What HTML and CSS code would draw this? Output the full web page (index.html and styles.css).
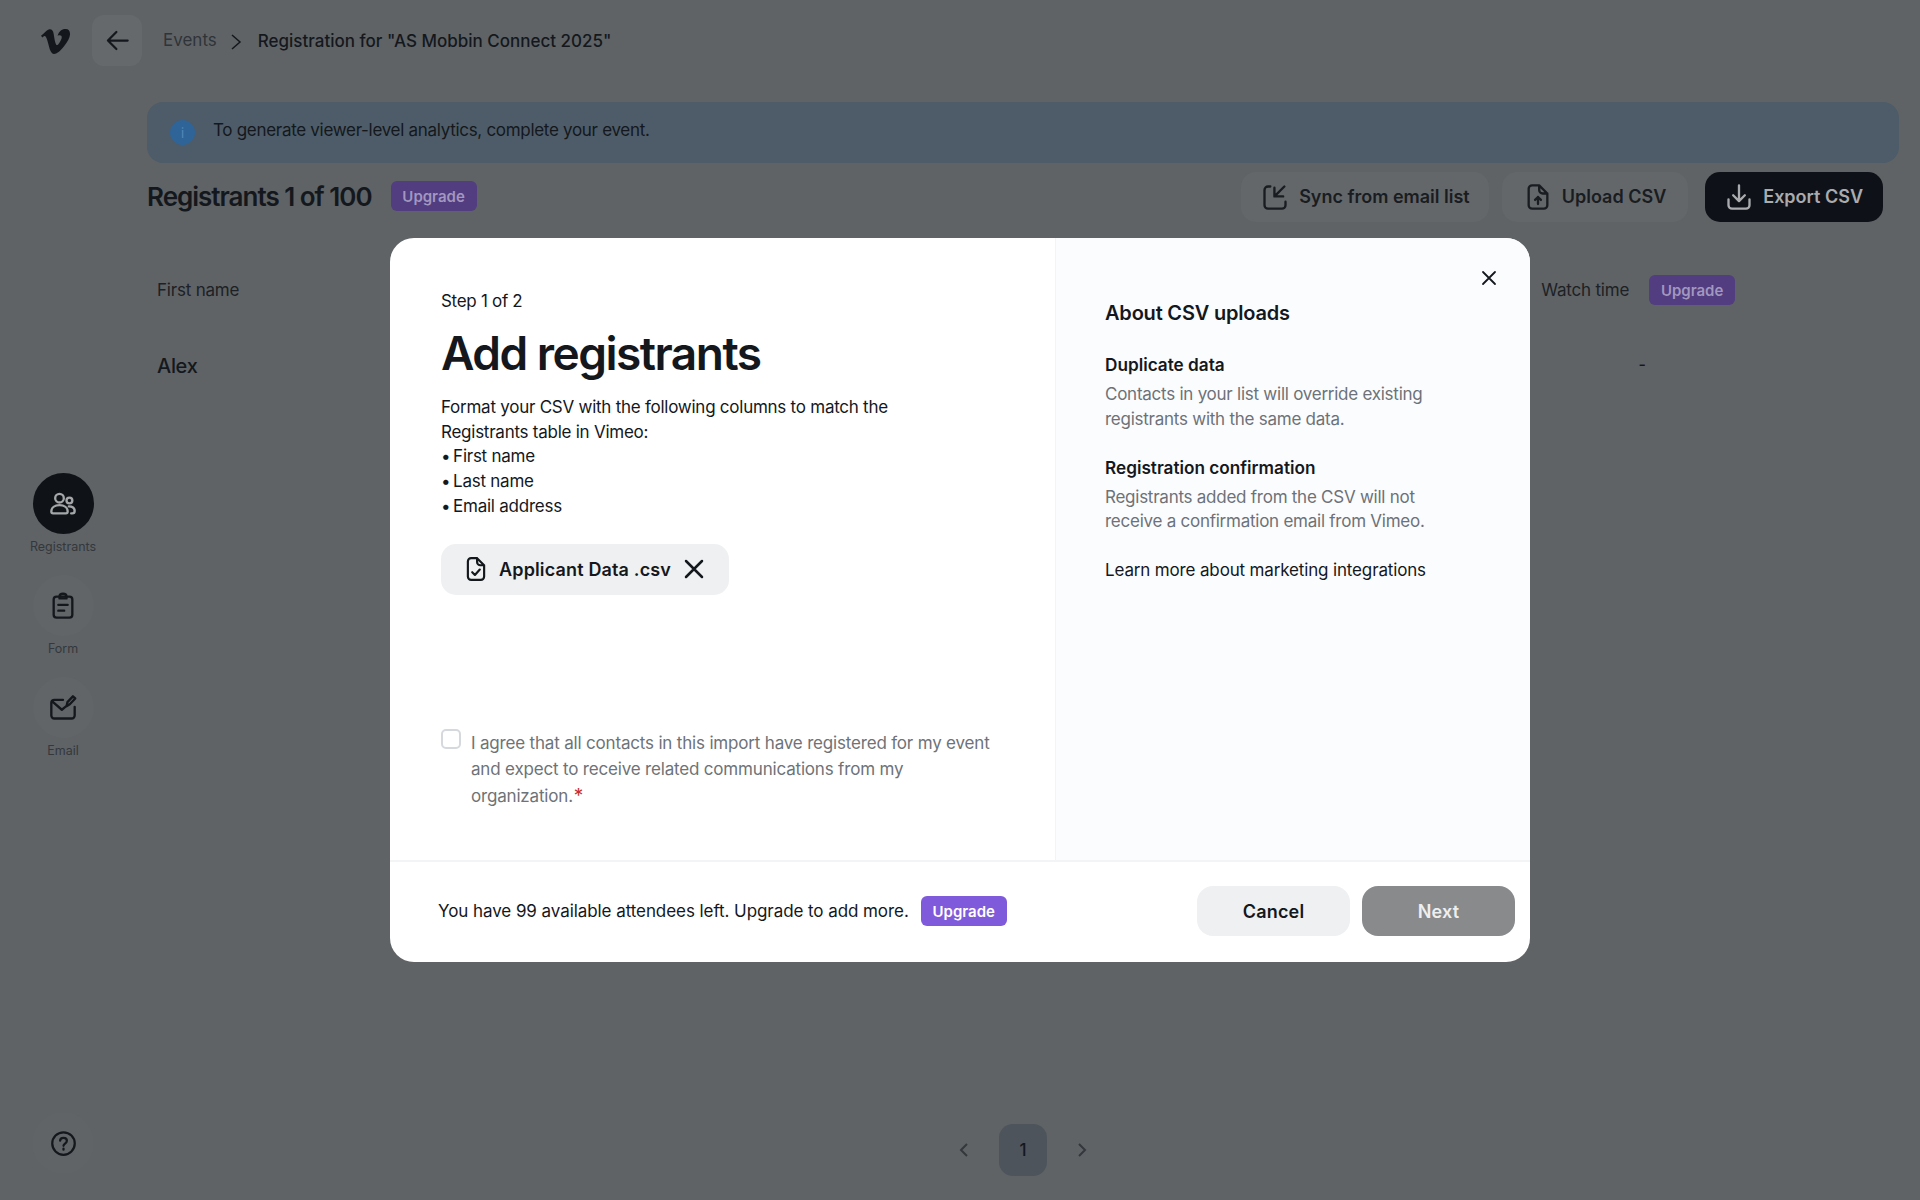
FILE: index.html
```html
<!DOCTYPE html>
<html lang="en">
<head>
    <meta charset="UTF-8">
    <meta name="viewport" content="width=device-width, initial-scale=1.0">
    <title>Add registrants</title>
    <link rel="stylesheet" href="styles.css">
</head>
<body>
    <div class="page">
        <header class="topbar">
            <svg class="logo" viewBox="0 0 24 24"><path d="M23.9765 6.4168c-.105 2.338-1.739 5.5429-4.894 9.6088-3.2679 4.247-6.0258 6.3699-8.2898 6.3699-1.409 0-2.578-1.294-3.553-3.881l-1.9179-7.1138c-.719-2.584-1.488-3.878-2.312-3.878-.179 0-.806.378-1.8809 1.132L0 7.2298a315.065 315.065 0 003.501-3.1279c1.579-1.368 2.765-2.085 3.5589-2.159 1.867-.18 3.016 1.1 3.447 3.838.465 2.953.789 4.789.971 5.5069.5389 2.45 1.1309 3.674 1.7759 3.674.502 0 1.2569-.796 2.2639-2.385 1.004-1.589 1.5429-2.797 1.6149-3.628.144-1.371-.395-2.061-1.614-2.061-.574 0-1.167.121-1.777.391 1.186-3.868 3.434-5.757 6.7619-5.637 2.4729.06 3.6279 1.664 3.4929 4.7969z"/></svg>
            <button class="back-btn">
                <svg viewBox="0 0 24 24" class="line-icon"><path d="M21 12H4M11 4.500 3.500 12l7.500 7.500"/></svg>
            </button>
            <span class="crumb">Events</span>
            <svg viewBox="0 0 12 18" class="crumb-sep"><path d="M2 2l8 7-8 7"/></svg>
            <span class="crumb-current">Registration for "AS Mobbin Connect 2025"</span>
        </header>

        <div class="layout">
            <nav class="sidebar">
                <div class="nav-links">
                    <div class="nav-item">
                        <div class="nav-circle active">
                            <svg viewBox="0 0 24 24" class="line-icon"><circle cx="9" cy="7" r="3.700"/><circle cx="17.500" cy="9" r="2.500"/><path d="M2 18.500c0-3.500 3-5.500 7-5.500s7 2 7 5.500c0 1-.5 1.500-1.500 1.500h-11C2.500 20 2 19.500 2 18.500zM17 14c3 0 5 1.500 5 4 0 1.300-.8 2-2 2h-1"/></svg>
                        </div>
                        <span>Registrants</span>
                    </div>
                    <div class="nav-item">
                        <div class="nav-circle">
                            <svg viewBox="0 0 24 24" class="line-icon"><rect x="4" y="4" width="16" height="18" rx="2.500"/><path d="M9 4c0-1.500 1-2.500 3-2.500s3 1 3 2.500v1.500H9zM8 11h8M8 16h5"/></svg>
                        </div>
                        <span>Form</span>
                    </div>
                    <div class="nav-item">
                        <div class="nav-circle">
                            <svg viewBox="0 0 24 24" class="line-icon"><path d="M12 5H4.500A2.500 2.500 0 002 7.500v11A2.500 2.500 0 004.500 21h15a2.500 2.500 0 002.500-2.500V11M3 6.500l8 7 3-2.500M15 10.500l.8-3.500 4.700-5 2 1.800-4.700 5z"/></svg>
                        </div>
                        <span>Email</span>
                    </div>
                </div>
                <div class="help">
                    <svg viewBox="0 0 24 24" class="line-icon"><circle cx="12" cy="12" r="10"/><path d="M9 9.500C9 7.800 10.300 7 12 7s3 1 3 2.500c0 2.500-3 2.500-3 4.500M12 16.500v1"/></svg>
                </div>
            </nav>

            <main class="content">
                <div class="banner">
                    <span class="info-dot">i</span>
                    <span class="banner-text">To generate viewer-level analytics, complete your event.</span>
                </div>
                <div class="title-row">
                    <h2>Registrants 1 of 100</h2>
                    <span class="badge dim">Upgrade</span>
                    <div class="actions">
                        <button class="btn sync">
                            <svg viewBox="0 0 24 24" class="line-icon"><path d="M8 3H6a3 3 0 00-3 3v13a3 3 0 003 3h12a3 3 0 003-3v-3M20 3l-8 8M11.500 4v7.500H19"/></svg>
                            Sync from email list
                        </button>
                        <button class="btn upload">
                            <svg viewBox="0 0 24 24" class="line-icon"><path d="M13 2H7a3 3 0 00-3 3v14a3 3 0 003 3h10a3 3 0 003-3V9zM13 2v4a3 3 0 003 3h4M12 18v-6M9.500 14.500 12 12l2.500 2.500"/></svg>
                            Upload CSV
                        </button>
                        <button class="btn dark">
                            <svg viewBox="0 0 24 24" class="line-icon"><path d="M12 2v13M7 10.500l5 5 5-5M3 14v5a3 3 0 003 3h12a3 3 0 003-3v-5"/></svg>
                            Export CSV
                        </button>
                    </div>
                </div>
                <div class="table-head">
                    <span>First name</span>
                    <span class="watch-col">Watch time <span class="badge dim">Upgrade</span></span>
                </div>
                <div class="table-row">
                    <span>Alex</span>
                    <span class="dash">-</span>
                </div>
                <div class="pager">
                    <svg viewBox="0 0 10 16"><path d="M8 2 2 8l6 6"/></svg>
                    <span class="page-num">1</span>
                    <svg viewBox="0 0 10 16"><path d="M2 2l6 6-6 6"/></svg>
                </div>
            </main>
        </div>
    </div>

    <div class="modal">
        <div class="modal-body">
            <div class="modal-left">
                <p class="step">Step 1 of 2</p>
                <h1>Add registrants</h1>
                <p class="intro">Format your CSV with the following columns to match the<br>Registrants table in Vimeo:<br><span class="dot">•</span> First name<br><span class="dot">•</span> Last name<br><span class="dot">•</span> Email address</p>
                <div class="file-chip">
                    <svg viewBox="0 0 24 24" class="line-icon"><path d="M13 2H7.500a3 3 0 00-3 3v14a3 3 0 003 3h9a3 3 0 003-3V8.500zM13 2v3.500a3 3 0 003 3h3.500M8.500 15l2.500 2.500 4.500-5"/></svg>
                    <span>Applicant Data .csv</span>
                    <svg viewBox="0 0 24 24" class="chip-x"><path d="M4 4l16 16M20 4 4 20"/></svg>
                </div>
                <label class="agree">
                    <span class="checkbox"></span>
                    <span class="agree-text">I agree that all contacts in this import have registered for my event and expect to receive related communications from my organization.<em>*</em></span>
                </label>
            </div>
            <aside class="modal-right">
                <h3>About CSV uploads</h3>
                <h4>Duplicate data</h4>
                <p>Contacts in your list will override existing registrants with the same data.</p>
                <h4>Registration confirmation</h4>
                <p>Registrants added from the CSV will not receive a confirmation email from Vimeo.</p>
                <span class="learn">Learn more about marketing integrations</span>
            </aside>
        </div>
        <footer class="modal-foot">
            <span>You have 99 available attendees left. Upgrade to add more.</span>
            <span class="badge">Upgrade</span>
            <button class="foot-btn cancel">Cancel</button>
            <button class="foot-btn next">Next</button>
        </footer>
        <svg viewBox="0 0 16 16" class="close-x"><path d="M2 2l12 12M14 2 2 14"/></svg>
    </div>
</body>
</html>
```

FILE: styles.css
```css
* {
    box-sizing: border-box;
}

body {
    margin: 0;
    height: 1200px;
    overflow: hidden;
    background-color: #5f6366;
    color: #14181d;
    font-family: Inter, "Liberation Sans", sans-serif;
    letter-spacing: -0.3px;
}

button {
    font-family: inherit;
    letter-spacing: inherit;
    border: none;
}

.line-icon {
    fill: none;
    stroke: currentColor;
    stroke-width: 2;
    stroke-linecap: round;
    stroke-linejoin: round;
}

.topbar {
    height: 102px;
    padding: 15px 0 0 41px;
    display: flex;
    align-items: flex-start;
}

.logo {
    width: 29px;
    height: 29px;
    margin-top: 12px;
    fill: #14181d;
}

.back-btn {
    width: 50px;
    height: 51px;
    margin-left: 22px;
    padding: 0;
    border-radius: 12px;
    background-color: #66696c;
    color: #14181d;
    display: flex;
    align-items: center;
    justify-content: center;
}

.back-btn svg {
    width: 27px;
    height: 27px;
}

.crumb {
    margin: 15px 0 0 21px;
    font-size: 17px;
    letter-spacing: 0;
    color: #2f3439;
}

.crumb-sep {
    width: 12px;
    height: 18px;
    margin: 18px 0 0 13px;
    fill: none;
    stroke: #14181d;
    stroke-width: 1.500;
}

.crumb-current {
    margin: 16px 0 0 16px;
    font-size: 17px;
    font-weight: 500;
    letter-spacing: 0;
}

.layout {
    display: flex;
    height: 1098px;
}

.sidebar {
    width: 147px;
    padding: 0 0 26px 24px;
    display: flex;
    flex-direction: column;
}

.nav-links {
    margin-top: 371px;
    width: 78px;
    display: flex;
    flex-direction: column;
    gap: 21px;
}

.nav-item {
    display: flex;
    flex-direction: column;
    align-items: center;
    gap: 5px;
    font-size: 12.500px;
    letter-spacing: 0;
    color: #34383c;
}

.nav-circle {
    width: 61px;
    height: 61px;
    border-radius: 50%;
    background-color: #626568;
    color: #14181d;
    display: flex;
    align-items: center;
    justify-content: center;
}

.nav-circle svg {
    width: 28px;
    height: 28px;
}

.nav-circle.active {
    background-color: #0f1318;
    color: #a4a6a8;
}

.help {
    margin: auto 0 0 8px;
    width: 62px;
    height: 62px;
    border-radius: 50%;
    background-color: #616467;
    display: flex;
    align-items: center;
    justify-content: center;
}

.help svg {
    width: 27px;
    height: 27px;
}

.content {
    flex: 1;
    padding-right: 21px;
}

.banner {
    height: 61px;
    padding-left: 23px;
    border-radius: 16px;
    background-color: #4d5c68;
    font-size: 17px;
    display: flex;
    align-items: center;
    gap: 18px;
}

.banner-text {
    margin-bottom: 6px;
}

.info-dot {
    width: 25px;
    height: 25px;
    border-radius: 50%;
    background-color: #2f6498;
    color: #5587b8;
    font-size: 13px;
    text-align: center;
    line-height: 26px;
}

.title-row {
    height: 50px;
    margin-top: 9px;
    display: flex;
    align-items: center;
}

.title-row h2 {
    margin: -2px 0 0;
    font-size: 26px;
    font-weight: 600;
    letter-spacing: -1px;
}

.badge {
    width: 86px;
    height: 30px;
    border-radius: 6px;
    background-color: #7f5bdb;
    color: #fff;
    font-size: 15px;
    font-weight: 600;
    letter-spacing: 0;
    display: inline-flex;
    align-items: center;
    justify-content: center;
}

.badge.dim {
    background-color: #513d80;
    color: #a297bf;
}

.title-row .badge {
    margin: -2px 0 0 19px;
}

.actions {
    margin-left: auto;
    margin-right: 16px;
    display: flex;
    gap: 15px;
}

.btn {
    height: 50px;
    padding: 0 20px 1px;
    border-radius: 15px;
    background-color: #64676a;
    color: #191d21;
    font-size: 18px;
    font-weight: 600;
    letter-spacing: 0;
    display: flex;
    align-items: center;
    gap: 10px;
}

.btn svg {
    width: 28px;
    height: 28px;
}

.btn.sync {
    padding-right: 19px;
}

.btn.upload {
    margin-left: -2px;
    padding: 0 22px 1px;
}

.btn.dark {
    margin-left: 2px;
    background-color: #0e1218;
    color: #a9abae;
}

.table-head {
    margin: 53px 0 0 10px;
    display: flex;
    align-items: center;
    height: 30px;
    font-size: 17px;
    letter-spacing: -0.200px;
    color: #1d2125;
}

.watch-col {
    margin-left: 1302px;
    display: flex;
    align-items: center;
    gap: 20px;
}

.table-row {
    margin: 48.500px 0 0 10px;
    display: flex;
    font-size: 20px;
    font-weight: 500;
}

.dash {
    margin-left: 1441px;
    font-size: 16px;
}

.pager {
    margin: 746.500px 0 0 812px;
    display: flex;
    align-items: center;
    gap: 30px;
    fill: none;
    stroke: #34383c;
    stroke-width: 2;
}

.pager svg {
    width: 10px;
    height: 16px;
}

.page-num {
    width: 48px;
    height: 52px;
    border-radius: 14px;
    background-color: #4e545c;
    stroke: none;
    font-size: 17px;
    font-weight: 500;
    text-align: center;
    line-height: 52px;
}

.modal {
    position: absolute;
    left: 390px;
    top: 238px;
    width: 1140px;
    height: 724px;
    border-radius: 24px;
    background-color: #fff;
    overflow: hidden;
    display: flex;
    flex-direction: column;
}

.modal-body {
    height: 624px;
    display: flex;
    border-bottom: 2px solid #f3f4f5;
}

.modal-left {
    width: 665px;
    padding: 54px 0 0 51px;
}

.step {
    margin: 0;
    font-size: 17px;
    line-height: 19px;
}

.modal-left h1 {
    margin: 12px 0 0;
    font-size: 46px;
    line-height: 60px;
    font-weight: 600;
    letter-spacing: -1.500px;
}

.intro {
    margin: 12px 0 0;
    font-size: 17px;
    line-height: 24.700px;
    letter-spacing: -0.250px;
}

.dot {
    letter-spacing: -2px;
}

.file-chip {
    width: 288px;
    height: 51px;
    margin-top: 25px;
    padding-left: 22px;
    border-radius: 15px;
    background-color: #eff0f1;
    font-size: 18px;
    font-weight: 600;
    letter-spacing: 0.150px;
    display: flex;
    align-items: center;
}

.file-chip svg {
    width: 26px;
    height: 26px;
}

.file-chip span {
    margin-left: 10px;
}

.file-chip .chip-x {
    width: 24px;
    height: 24px;
    margin-left: 11px;
    fill: none;
    stroke: #14181d;
    stroke-width: 2.500;
    stroke-linecap: round;
}

.agree {
    margin-top: 134px;
    width: 555px;
    display: flex;
    gap: 10px;
    font-size: 17px;
    line-height: 26.500px;
    letter-spacing: -0.180px;
    color: #6e7378;
}

.agree-text {
    margin-top: 1px;
}

.checkbox {
    flex: none;
    width: 20px;
    height: 20px;
    border: 2px solid #d5d9de;
    border-radius: 5px;
}

.agree em {
    display: inline-block;
    margin-left: 1px;
    font-size: 19px;
    line-height: 16px;
    color: #c4302b;
    font-style: normal;
}

.modal-right {
    flex: 1;
    padding: 62px 60px 0 49px;
    background-color: #fbfcfe;
    border-left: 1px solid #f3f4f5;
    font-size: 17px;
    line-height: 24.500px;
    letter-spacing: -0.250px;
    color: #6d7278;
}

.modal-right h3 {
    margin: 0;
    font-size: 20px;
    line-height: 26px;
    font-weight: 600;
    letter-spacing: -0.200px;
    color: #14181d;
}

.modal-right h4 {
    margin: 26px 0 0;
    font-size: 17.200px;
    line-height: 26px;
    font-weight: 600;
    letter-spacing: 0;
    color: #14181d;
}

.modal-right p + h4 {
    margin-top: 23.500px;
}

.modal-right p {
    margin: 4px 0 0;
}

.learn {
    display: block;
    margin-top: 24px;
    letter-spacing: -0.150px;
    color: #14181d;
}

.modal-foot {
    flex: 1;
    padding: 0 15px 2px 48px;
    font-size: 17px;
    letter-spacing: -0.070px;
    display: flex;
    align-items: center;
}

.modal-foot .badge {
    margin-left: 12px;
}

.foot-btn {
    width: 153px;
    height: 50px;
    border-radius: 16px;
    font-size: 18px;
    font-weight: 600;
    letter-spacing: 0.200px;
}

.cancel {
    margin-left: auto;
    background-color: #eff0f1;
    color: #14181d;
}

.next {
    margin-left: 12px;
    background-color: #888a8b;
    color: #eee;
}

.close-x {
    position: absolute;
    right: 33px;
    top: 32px;
    width: 16px;
    height: 16px;
    fill: none;
    stroke: #14181d;
    stroke-width: 1.800;
    stroke-linecap: round;
}
```
